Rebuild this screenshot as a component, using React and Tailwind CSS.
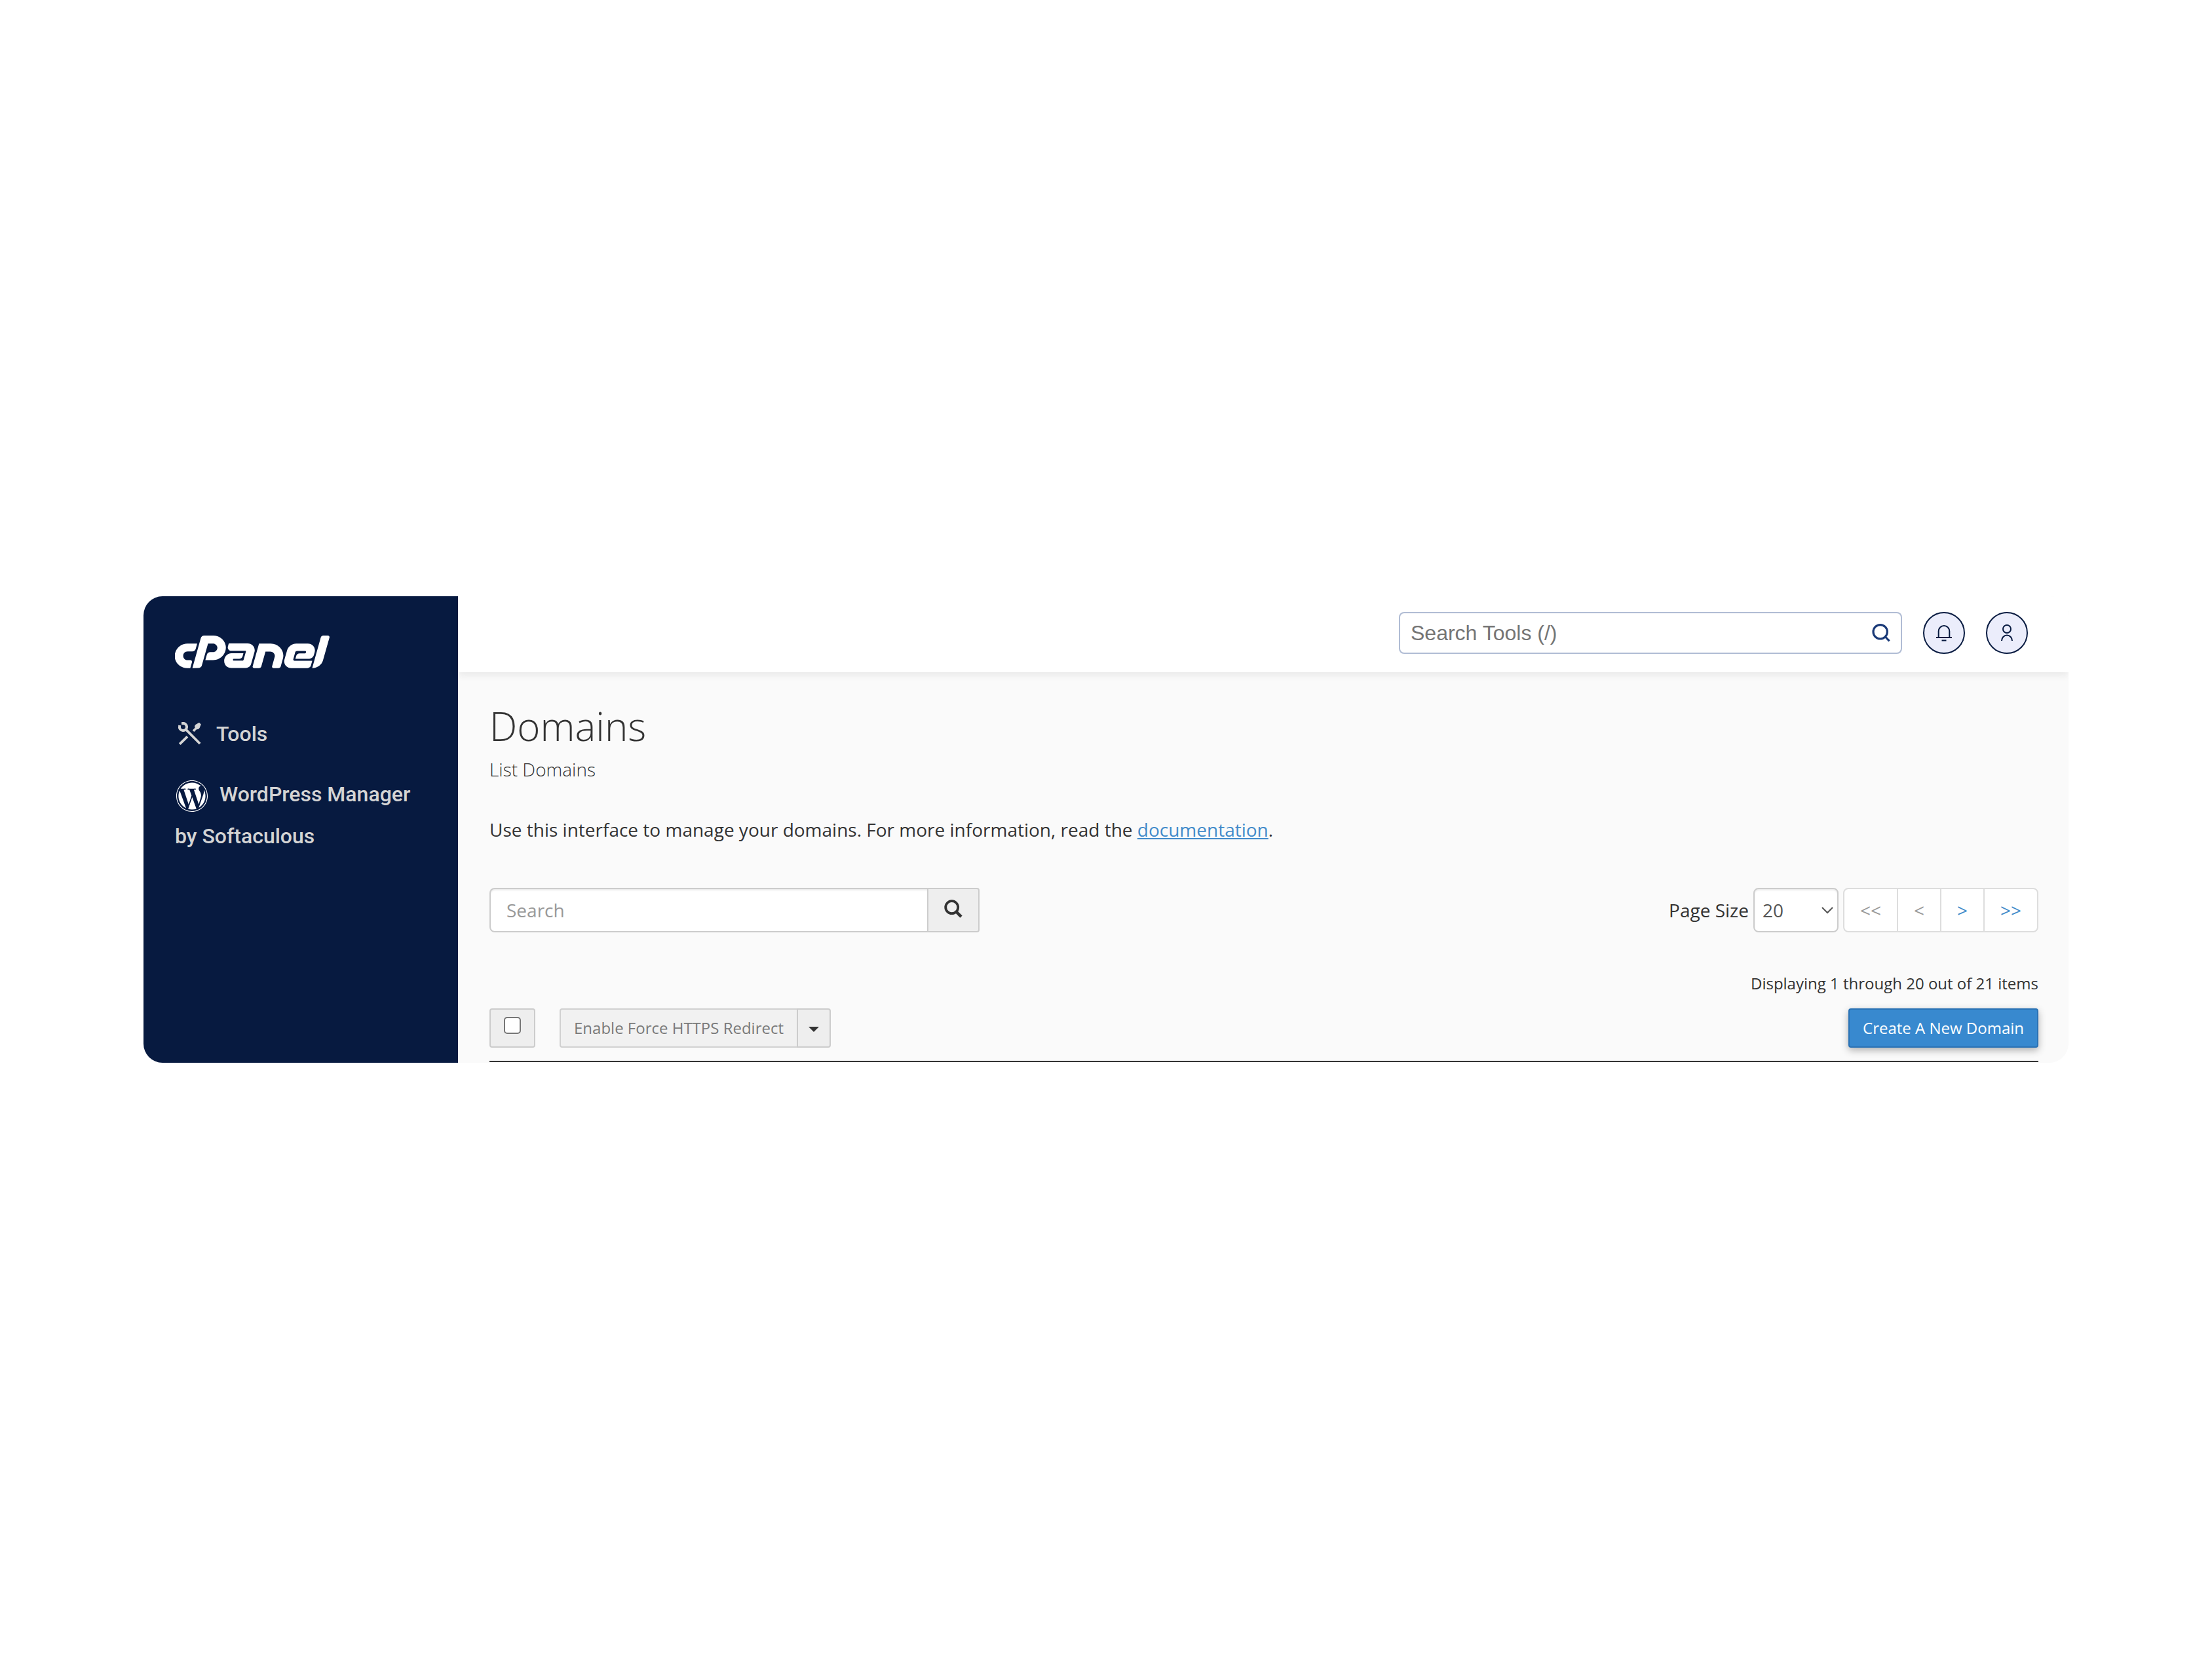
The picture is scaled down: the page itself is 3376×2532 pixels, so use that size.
import React from "react";
import { FaCpanel, FaWordpress } from "react-icons/fa";

function ToolsIcon() {
  return (
    <svg viewBox="0 0 36 36" className="h-9 w-9 shrink-0" fill="none" stroke="#d4d4d4" aria-hidden="true">
      <path d="M5 2.2L6.4 2A5.6 5.6 0 1 1 2 6.4L2.2 5" strokeWidth="4" />
      <path d="M11.2 10.8L33.2 33" strokeWidth="3.8" />
      <path d="M14 22.2L2.2 33.6" strokeWidth="3.8" />
      <path d="M23 13.8L28 8.8" strokeWidth="3.6" />
      <path d="M25 7.8Q25 5 26.8 3.8L32 0.8L34.8 3.6L32.6 9Q31 11.4 28.2 11.2Z" fill="#d4d4d4" stroke="none" />
    </svg>
  );
}

function SearchToolsIcon() {
  return (
    <svg viewBox="0 0 30 30" className="h-[30px] w-[30px]" fill="none" stroke="#1a3a78" strokeWidth="3.2" aria-hidden="true">
      <circle cx="12.7" cy="13.3" r="10.7" />
      <path d="M20 20.5L26.6 27.4" />
    </svg>
  );
}

function BellIcon() {
  return (
    <svg viewBox="0 0 24 26" className="h-[26px] w-6" fill="none" stroke="#071a40" strokeWidth="2" aria-hidden="true">
      <path d="M3.7 19.5V10.5A8.3 8.5 0 0 1 20.3 10.5V19.5" />
      <path d="M0 20H24M8.5 24.5H15.5" />
    </svg>
  );
}

function UserIcon() {
  return (
    <svg viewBox="0 0 24 26" className="h-[26px] w-6" fill="none" stroke="#071a40" strokeWidth="2" aria-hidden="true">
      <circle cx="12" cy="7" r="6" />
      <path d="M4 25A8 8.5 0 0 1 20 25" />
    </svg>
  );
}

function MagnifierIcon() {
  return (
    <svg viewBox="0 0 28 28" className="h-7 w-7" fill="none" stroke="#333333" aria-hidden="true">
      <circle cx="11.7" cy="11.7" r="9.5" strokeWidth="3.8" />
      <path d="M18 18L26 26.2" strokeWidth="4.6" />
    </svg>
  );
}

function Sidebar() {
  return (
    <aside className="w-[480px] shrink-0 bg-[#071a40] px-12 pt-[60px] font-[Roboto,sans-serif] text-[32px] leading-[64px] font-medium text-[#d4d4d4]">
      <a href="#home" aria-label="cPanel" className="block text-white">
        <FaCpanel viewBox="1 179 639 142" preserveAspectRatio="none" className="h-[50px] w-[236px]" />
      </a>
      <nav className="mt-[68px] flex flex-col gap-7">
        <a href="#tools" className="flex items-center gap-[22px] pl-[5px]">
          <ToolsIcon />
          <span>Tools</span>
        </a>
        <a href="#wordpress" className="block">
          <FaWordpress viewBox="8 8 496 496" className="mr-[18px] ml-[2px] inline h-12 w-12 text-white" />
          WordPress Manager by Softaculous
        </a>
      </nav>
    </aside>
  );
}

function TopBar() {
  const round =
    "flex h-16 w-16 items-center justify-center rounded-full border-2 border-[#071a40] bg-[#ebedfb]";
  return (
    <header className="relative flex h-[116px] items-center justify-end gap-8 bg-white pr-[62px] shadow-[0_4px_12px_rgba(0,0,0,0.08)]">
      <form role="search" className="mb-1 flex h-16 w-[768px] items-center rounded-lg border-2 border-[#b0bcd4] bg-white pr-[14px]">
        <input
          type="text"
          aria-label="Search Tools"
          placeholder="Search Tools (/)"
          className="h-full min-w-0 flex-1 pl-4 font-['Liberation_Sans',sans-serif] text-[32px] outline-none placeholder:text-[#757575]"
        />
        <button type="button" aria-label="Search tools">
          <SearchToolsIcon />
        </button>
      </form>
      <div className="mb-1 flex gap-8">
        <button type="button" aria-label="Notifications" className={round}>
          <BellIcon />
        </button>
        <button type="button" aria-label="Account" className={round}>
          <UserIcon />
        </button>
      </div>
    </header>
  );
}

function Pager() {
  const pages = [
    { label: "<<", name: "First page", off: true },
    { label: "<", name: "Previous page", off: true },
    { label: ">", name: "Next page", off: false },
    { label: ">>", name: "Last page", off: false },
  ];
  return (
    <div className="flex h-[68px] divide-x-2 divide-[#dddddd] overflow-hidden rounded-lg border-2 border-[#dddddd] bg-white">
      {pages.map((p) => (
        <button
          key={p.name}
          type="button"
          aria-label={p.name}
          disabled={p.off}
          className="px-6 text-[#428bca] disabled:text-[#999999]"
        >
          {p.label}
        </button>
      ))}
    </div>
  );
}

function Domains() {
  return (
    <main className="flex-1 bg-[#fafafa] pt-[42px] pr-[46px] pb-px pl-12 font-['Open_Sans',sans-serif] text-[28px] leading-10 text-[#333333]">
      <h1 className="text-[60px] leading-[80px] font-light">Domains</h1>
      <h2 className="mt-1.5 font-light">List Domains</h2>
      <p className="mt-[52px]">
        Use this interface to manage your domains. For more information, read the{" "}
        <a href="#documentation" className="text-[#428bca] underline">
          documentation
        </a>
        .
      </p>

      <div className="mt-[69px] flex items-center justify-between">
        <form role="search" className="flex h-[68px] w-[748px]">
          <input
            type="text"
            aria-label="Search domains"
            placeholder="Search"
            className="min-w-0 flex-1 rounded-l-lg border-2 border-r-0 border-[#cccccc] bg-white px-6 shadow-[inset_0_2px_2px_rgba(0,0,0,0.08)] outline-none placeholder:text-[#999999]"
          />
          <button
            type="button"
            aria-label="Search"
            className="flex w-20 items-center justify-center rounded-r-sm border-2 border-[#cccccc] bg-[#eeeeee] pb-1"
          >
            <MagnifierIcon />
          </button>
        </form>
        <div className="flex items-center gap-[7px]">
          <label htmlFor="page-size">Page Size</label>
          <div className="relative">
            <select
              id="page-size"
              defaultValue="20"
              className="block h-[68px] w-[130px] appearance-none rounded-lg border-2 border-[#cccccc] bg-white pl-3 text-[#555555] shadow-[inset_0_2px_2px_rgba(0,0,0,0.08)]"
            >
              <option>10</option>
              <option>20</option>
              <option>50</option>
              <option>100</option>
            </select>
            <svg viewBox="0 0 18 12" className="pointer-events-none absolute top-7 right-2 h-3 w-[18px]" fill="none" stroke="#555555" strokeWidth="2" aria-hidden="true">
              <path d="M1 2L9 10L17 2" />
            </svg>
          </div>
          <Pager />
        </div>
      </div>

      <p className="mt-[62px] text-right text-2xl leading-8">Displaying 1 through 20 out of 21 items</p>

      <div className="mt-[22px] flex h-[60px] text-2xl">
        <label className="flex w-[70px] justify-center rounded-sm border-2 border-[#cccccc] bg-[#eeeeee] pt-[11px]">
          <input
            type="checkbox"
            aria-label="Select all domains"
            className="h-[26px] w-[26px] appearance-none rounded-[5px] border-2 border-[#767676] bg-white"
          />
        </label>
        <div className="ml-[37px] flex">
          <button type="button" disabled className="rounded-l-sm border-2 border-r-0 border-[#d1d1d1] bg-[#f1f1f1] px-5 text-[#7a7a7a]">
            Enable Force HTTPS Redirect
          </button>
          <button
            type="button"
            aria-label="More actions"
            className="flex w-[52px] items-center justify-center rounded-r-sm border-2 border-[#cccccc] bg-[#eeeeee] pt-1"
          >
            <svg viewBox="0 0 16 8" className="h-2 w-4" fill="#333333" aria-hidden="true">
              <path d="M0 0H16L8 8Z" />
            </svg>
          </button>
        </div>
        <button
          type="button"
          className="ml-auto rounded-sm border-2 border-[#2a72b5] bg-[#3889cf] px-5 text-white shadow-[0_4px_12px_rgba(0,0,0,0.3)]"
        >
          Create A New Domain
        </button>
      </div>
      <hr className="mt-5 border-t-2 border-[#333333]" />
    </main>
  );
}

export default function App() {
  return (
    <div className="flex min-h-screen items-center bg-white px-[219px]">
      <div className="flex w-full overflow-hidden rounded-[29px]">
        <Sidebar />
        <div className="flex min-w-0 flex-1 flex-col">
          <TopBar />
          <Domains />
        </div>
      </div>
    </div>
  );
}
